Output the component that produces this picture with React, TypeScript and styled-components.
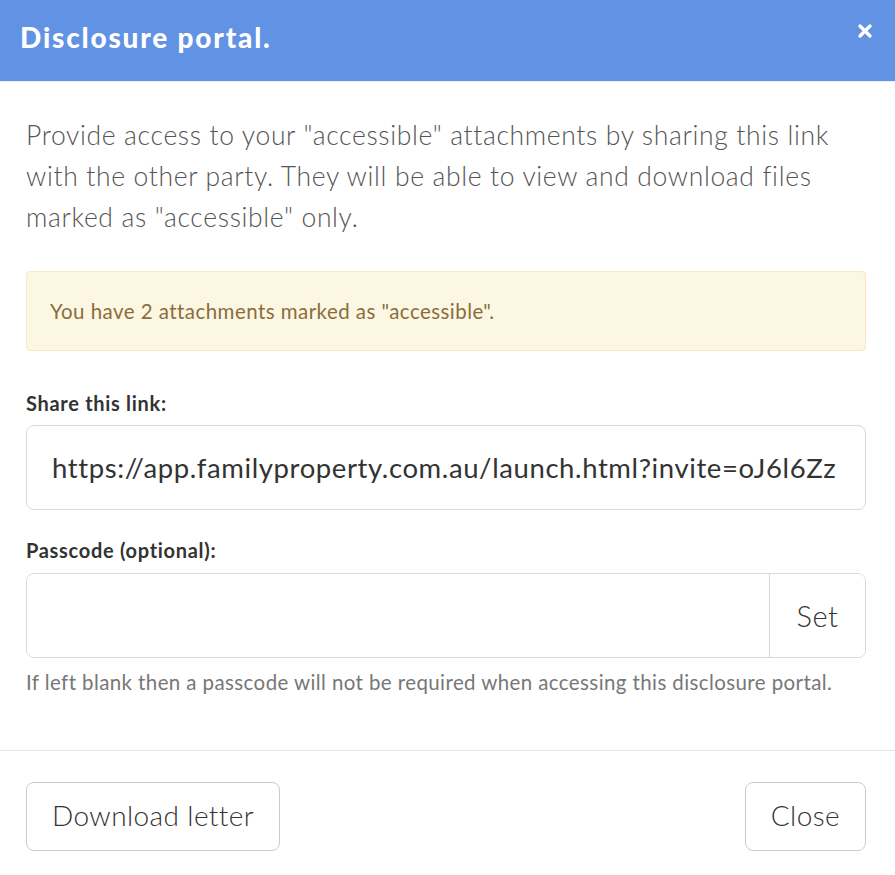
import { FC } from "react";
import styled, { createGlobalStyle } from "styled-components";

const GlobalStyle = createGlobalStyle`
  html, body {
    margin: 0;
    padding: 0;
    background: #ffffff;
  }
  * {
    box-sizing: border-box;
  }
`;

const App: FC = () => {
  return (
    <>
      <GlobalStyle />
      <Modal>
        <Header>
          <Title>Disclosure portal.</Title>
          <CloseIcon aria-label="Close">
            <svg width="16" height="16" viewBox="0 0 16 16">
              <path
                d="M3 3 L13 13 M13 3 L3 13"
                stroke="#ffffff"
                strokeWidth="3.4"
                strokeLinecap="round"
              />
            </svg>
          </CloseIcon>
        </Header>
        <Body>
          <Intro>
            Provide access to your "accessible" attachments by sharing this link
            with the other party. They will be able to view and download files
            marked as "accessible" only.
          </Intro>
          <Alert>You have 2 attachments marked as "accessible".</Alert>
          <Field>
            <Label htmlFor="share_link">Share this link:</Label>
            <TextInput
              id="share_link"
              readOnly
              value="https://app.familyproperty.com.au/launch.html?invite=oJ6l6Zz"
            />
          </Field>
          <Field>
            <Label htmlFor="passcode">Passcode (optional):</Label>
            <InputGroup>
              <GroupInput id="passcode" type="text" />
              <AddonButton type="button">Set</AddonButton>
            </InputGroup>
            <Help>
              If left blank then a passcode will not be required when accessing
              this disclosure portal.
            </Help>
          </Field>
        </Body>
        <Footer>
          <Button type="button">Download letter</Button>
          <Button type="button">Close</Button>
        </Footer>
      </Modal>
    </>
  );
};

export default App;

const Modal = styled.div`
  width: 895px;
  min-height: 875px;
  background: #ffffff;
  display: flex;
  flex-direction: column;
`;

const Header = styled.div`
  height: 82px;
  background: #6192e4;
  border-bottom: 1px solid #e9eefa;
  display: flex;
  align-items: center;
  justify-content: space-between;
  padding: 0 22px 7px 20px;
`;

const Title = styled.h1`
  margin: 0;
  color: #ffffff;
  font-family: Lato, "Liberation Sans", sans-serif;
  font-weight: 900;
  font-size: 28px;
  letter-spacing: 1.8px;
`;

const CloseIcon = styled.span`
  display: flex;
  align-items: center;
  margin-top: -12px;
`;

const Body = styled.div`
  padding: 33px 29px 0 26px;
  height: 668px;
  display: flex;
  flex-direction: column;
  font-family: Lato, "Liberation Sans", sans-serif;
`;

const Intro = styled.p`
  margin: 0 0 33px;
  max-width: 820px;
  color: #555555;
  font-weight: 300;
  font-size: 26.5px;
  letter-spacing: 0.65px;
  line-height: 41px;
`;

const Alert = styled.div`
  background: #fcf7e3;
  border: 1px solid #f8e8c4;
  border-radius: 4px;
  color: #8a6d3b;
  font-size: 20.5px;
  letter-spacing: 0.45px;
  padding: 27px 23px 27px 23px;
  margin-bottom: 40px;
`;

const Field = styled.div`
  display: flex;
  flex-direction: column;
  margin-bottom: 28px;
`;

const Label = styled.label`
  color: #333333;
  font-weight: 700;
  font-size: 20px;
  letter-spacing: 0.7px;
  line-height: 24px;
  margin-bottom: 10px;
`;

const TextInput = styled.input`
  width: 100%;
  height: 85px;
  border: 1px solid #d9d9d9;
  border-radius: 8px;
  padding: 0 22px 0 25px;
  font-family: inherit;
  font-size: 27.5px;
  letter-spacing: 0.6px;
  color: #333333;
  background: #ffffff;
  outline: none;
`;

const InputGroup = styled.div`
  display: flex;
  height: 85px;
  margin-top: 1px;
  border: 1px solid #d9d9d9;
  border-radius: 8px;
  overflow: hidden;
`;

const GroupInput = styled.input`
  flex: 1;
  border: none;
  padding: 0 22px;
  font-family: inherit;
  font-size: 26px;
  outline: none;
  background: #ffffff;
`;

const AddonButton = styled.button`
  width: 96px;
  border: none;
  border-left: 1px solid #d9d9d9;
  background: #ffffff;
  font-family: inherit;
  font-weight: 300;
  font-size: 29px;
  letter-spacing: 0.5px;
  color: #333333;
  cursor: pointer;
`;

const Help = styled.p`
  margin: 12px 0 0;
  color: #777777;
  font-size: 20.5px;
  letter-spacing: 0.4px;
  line-height: 24px;
`;

const Footer = styled.div`
  border-top: 1px solid #e5e5e5;
  padding: 31px 29px 24px 26px;
  display: flex;
  justify-content: space-between;
  align-items: center;
`;

const Button = styled.button`
  height: 69px;
  padding: 0 25px 4px;
  background: #ffffff;
  border: 1px solid #cccccc;
  border-radius: 8px;
  font-family: Lato, "Liberation Sans", sans-serif;
  font-weight: 300;
  font-size: 28px;
  letter-spacing: 0.4px;
  color: #333333;
  cursor: pointer;
`;
